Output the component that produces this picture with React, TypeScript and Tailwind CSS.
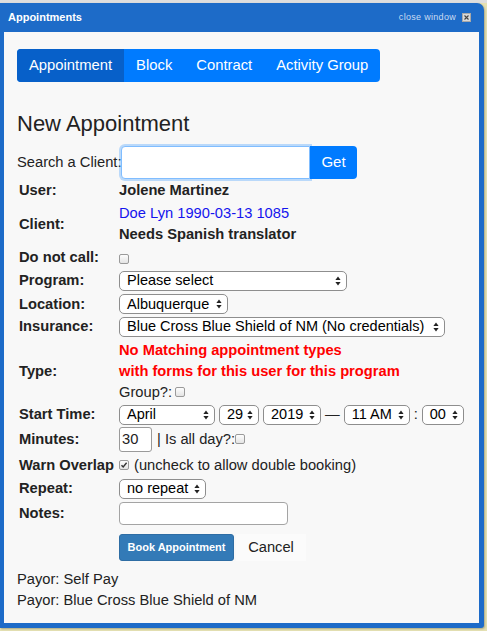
import React from "react";

function Arrows() {
  return (
    <svg width="6" height="10" viewBox="0 0 6 10" className="shrink-0">
      <path d="M3 0.5 L5.6 4 L0.4 4 Z" fill="#222" />
      <path d="M3 9.5 L5.6 6 L0.4 6 Z" fill="#222" />
    </svg>
  );
}

function Select({ label, w }: { label: string; w: string }) {
  return (
    <div
      className={`${w} h-[20px] flex items-center justify-between pl-[7px] pr-[5px] border border-[#8e8e8e] rounded-[5px] bg-white text-[14.5px] text-black leading-none`}
    >
      <span className="whitespace-nowrap">{label}</span>
      <Arrows />
    </div>
  );
}

function Check({ checked = false }: { checked?: boolean }) {
  return (
    <span className="inline-flex w-[10px] h-[10px] items-center justify-center border border-[#9a9a9a] rounded-[2px] bg-gradient-to-b from-[#fdfdfd] to-[#e4e4e4] align-middle">
      {checked && (
        <svg width="8" height="8" viewBox="0 0 8 8">
          <path d="M1.5 4.2 L3.2 6 L6.6 1.8" stroke="#333" strokeWidth="1.4" fill="none" />
        </svg>
      )}
    </span>
  );
}

function Row({
  label,
  h,
  children,
}: {
  label: string;
  h: string;
  children?: React.ReactNode;
}) {
  return (
    <div className={`flex items-center ${h}`}>
      <div className="w-[102px] pl-[2px] font-bold text-[14.7px] text-[#222] shrink-0 whitespace-nowrap">{label}</div>
      <div className="flex-1 min-w-0 text-[14.7px] text-[#222]">{children}</div>
    </div>
  );
}

export default function App() {
  const tabs = ["Appointment", "Block", "Contract", "Activity Group"];
  return (
    <div className="w-[487px] h-[631px] overflow-hidden bg-[#e5e1b3] font-['Liberation_Sans',Arial,sans-serif]">
      <div className="h-[3px] bg-[#dedede]" />
      <div className="w-[484px] h-[625px] bg-[#1d6bc8] rounded-tr-[7px] rounded-br-[3px] flex flex-col shadow-[1px_1px_2px_rgba(0,0,0,0.25)]">
        <div className="h-[29px] shrink-0 flex items-center justify-between pl-[8px] pr-[13px]">
          <span className="text-white font-bold text-[11px]">Appointments</span>
          <span className="flex items-center gap-[6px]">
            <span className="text-[9px] tracking-[0.3px] text-[#c9dbf2]">close window</span>
            <span className="w-[9px] h-[9px] bg-[#d9d9d9] border border-[#a8a8a8] flex items-center justify-center">
              <svg width="5" height="5" viewBox="0 0 5 5">
                <path d="M0.5 0.5 L4.5 4.5 M4.5 0.5 L0.5 4.5" stroke="#444" strokeWidth="1.1" />
              </svg>
            </span>
          </span>
        </div>
        <div className="flex-1 ml-[4px] mr-[5px] mb-[5px] bg-[#f8f8f8] pl-[13px] pt-[17px] text-[#222]">
          <div className="inline-flex h-[33px] rounded-[4px] bg-[#007bff] overflow-hidden">
            {tabs.map((t, i) => (
              <div
                key={t}
                className={`px-[12px] flex items-center text-white text-[14.8px] ${
                  i === 0 ? "bg-[#0760c9]" : ""
                }`}
              >
                {t}
              </div>
            ))}
          </div>

          <h1 className="mt-[29px] text-[22px] leading-[26px] text-[#222]">New Appointment</h1>

          <div className="mt-[9px] flex items-center h-[33px]">
            <span className="w-[104px] text-[14.7px] whitespace-nowrap">Search a Client:</span>
            <div className="w-[189px] h-[33px] bg-white border border-[#80bdff] rounded-l-[4px] shadow-[0_0_0_2px_rgba(0,123,255,0.25)]" />
            <div className="w-[47px] h-[33px] bg-[#007bff] rounded-r-[4px] flex items-center justify-center text-white text-[15px]">
              Get
            </div>
          </div>

          <Row label="User:" h="h-[22px]">
            <span className="font-bold">Jolene Martinez</span>
          </Row>
          <Row label="Client:" h="h-[46px]">
            <div className="leading-[21px] text-[#1414ee]">Doe Lyn 1990-03-13 1085</div>
            <div className="leading-[21px] font-bold">Needs Spanish translator</div>
          </Row>
          <Row label="Do not call:" h="h-[21px]">
            <Check />
          </Row>
          <Row label="Program:" h="h-[25px]">
            <Select label="Please select" w="w-[228px]" />
          </Row>
          <Row label="Location:" h="h-[22px]">
            <Select label="Albuquerque" w="w-[109px]" />
          </Row>
          <Row label="Insurance:" h="h-[23px]">
            <Select label="Blue Cross Blue Shield of NM (No credentials)" w="w-[326px]" />
          </Row>
          <Row label="Type:" h="h-[66px]">
            <div className="leading-[21px] font-bold text-[#ff0000]">No Matching appointment types</div>
            <div className="leading-[21px] font-bold text-[#ff0000]">with forms for this user for this program</div>
            <div className="leading-[21px] flex items-center gap-[3px]">
              Group?: <Check />
            </div>
          </Row>
          <Row label="Start Time:" h="h-[21px]">
            <div className="flex items-center">
              <Select label="April" w="w-[96px]" />
              <div className="ml-[4px]">
                <Select label="29" w="w-[40px]" />
              </div>
              <div className="ml-[4px]">
                <Select label="2019" w="w-[58px]" />
              </div>
              <span className="mx-[4px]">—</span>
              <Select label="11 AM" w="w-[66px]" />
              <span className="mx-[4px]">:</span>
              <Select label="00" w="w-[42px]" />
            </div>
          </Row>
          <Row label="Minutes:" h="h-[28px]">
            <div className="flex items-center">
              <div className="w-[33px] h-[25px] bg-white border border-[#9a9a9a] rounded-[3px] pl-[2px] flex items-center">
                30
              </div>
              <span className="ml-[5px]">| Is all day?:</span>
              <Check />
            </div>
          </Row>
          <Row label="Warn Overlap" h="h-[24px]">
            <div className="flex items-center gap-[5px]">
              <Check checked />
              <span>(uncheck to allow double booking)</span>
            </div>
          </Row>
          <Row label="Repeat:" h="h-[23px]">
            <Select label="no repeat" w="w-[87px]" />
          </Row>
          <Row label="Notes:" h="h-[26px]">
            <div className="w-[169px] h-[23px] bg-white border border-[#a4a4a4] rounded-[4px]" />
          </Row>

          <div className="mt-[8px] pl-[102px] flex items-center h-[27px]">
            <div className="w-[115px] h-[27px] bg-[#337ab7] border border-[#2e6da4] rounded-[3px] flex items-center justify-center text-white text-[11px] font-bold">
              Book Appointment
            </div>
            <div className="ml-[2px] w-[70px] h-[27px] bg-[#fbfbfb] flex items-center justify-center text-[14.7px] text-[#222]">
              Cancel
            </div>
          </div>

          <div className="mt-[8px] text-[14.7px] leading-[21px]">Payor: Self Pay</div>
          <div className="text-[14.7px] leading-[21px]">Payor: Blue Cross Blue Shield of NM</div>
        </div>
      </div>
    </div>
  );
}
